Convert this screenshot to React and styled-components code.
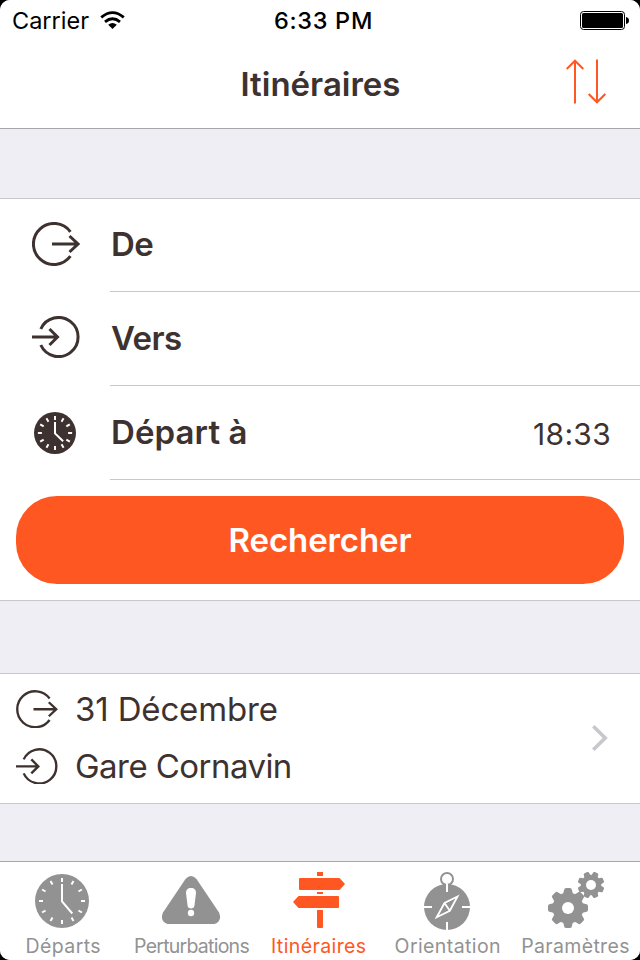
import React from "react";
import styled, { createGlobalStyle } from "styled-components";

const ink = "#3e3230";
const orange = "#ff5722";
const grey = "#929292";
const hairline = "#c8c7cc";

const GlobalStyle = createGlobalStyle`
  * { box-sizing: border-box; }
  body { margin: 0; background: #000; font-family: Inter, "Liberation Sans", sans-serif; }
  svg { display: block; flex: none; }
`;

const Screen = styled.div`
  display: flex;
  flex-direction: column;
  width: 640px;
  height: 960px;
  overflow: hidden;
  border-radius: 10px;
  background: #efeef4;
  color: ${ink};
`;

const Header = styled.header`
  height: 129px;
  background: #fff;
  border-bottom: 1px solid #a7a7aa;
`;

const StatusBar = styled.div`
  display: grid;
  grid-template-columns: 1fr auto 1fr;
  align-items: center;
  height: 41px;
  padding: 0 11px 0 12px;
  color: #000;
  font-size: 23.5px;
  line-height: 41px;
`;

const Carrier = styled.div`
  display: flex;
  align-items: center;
  gap: 11px;
`;

const Time = styled.div`
  font-weight: 500;
  letter-spacing: 0.7px;
  padding-left: 6px;
`;

const Battery = styled.div`
  display: flex;
  justify-content: flex-end;
`;

const TitleBar = styled.div`
  display: grid;
  grid-template-columns: 1fr auto 1fr;
  align-items: center;
  height: 87px;
  padding-right: 32px;
`;

const Title = styled.h1`
  grid-column: 2;
  margin: 0;
  padding-left: 33px;
  font-size: 33px;
  font-weight: 600;
  line-height: 84px;
  height: 86px;
`;

const SwapButton = styled.button`
  justify-self: end;
  margin-top: -6px;
  padding: 0;
  border: 0;
  background: none;
  color: ${orange};
`;

const Panel = styled.section`
  background: #fff;
  border-top: 1px solid ${hairline};
  border-bottom: 1px solid ${hairline};
  margin-top: ${(p) => p.$gap}px;
`;

const Field = styled.div`
  display: flex;
  align-items: center;
  height: ${(p) => p.$height}px;
  padding-left: 32px;
`;

const FieldIcon = styled.div`
  width: 78px;
  padding-left: ${(p) => p.$inset || 0}px;
  padding-bottom: ${(p) => p.$lift || 0}px;
`;

const FieldBody = styled.div`
  flex: 1;
  display: flex;
  justify-content: space-between;
  align-items: center;
  height: 100%;
  padding-right: 29px;
  border-bottom: 1px solid ${hairline};
`;

const FieldLabel = styled.span`
  padding-left: 1px;
  padding-bottom: 2px;
  font-size: 33px;
  font-weight: 600;
  line-height: 40px;
  letter-spacing: ${(p) => p.$spacing || 0}px;
`;

const FieldValue = styled.span`
  padding-top: 3px;
  font-size: 30px;
  line-height: 40px;
  letter-spacing: 0.3px;
`;

const SearchButton = styled.button`
  display: block;
  width: 608px;
  height: 88px;
  margin: 16px;
  padding: 0;
  border: 0;
  border-radius: 41px;
  background: ${orange};
  color: #fff;
  font: 600 33px/88px Inter, "Liberation Sans", sans-serif;
  letter-spacing: -0.1px;
`;

const Recent = styled.div`
  display: flex;
  align-items: center;
  justify-content: space-between;
  height: 129px;
  padding: 0 32px 2px 16px;
`;

const Stops = styled.div`
  display: flex;
  flex-direction: column;
`;

const Stop = styled.div`
  display: flex;
  align-items: center;
  gap: 17px;
  height: 57px;
  font-size: 33px;
  line-height: 56px;
  letter-spacing: ${(p) => p.$spacing}px;
`;

const TabBar = styled.nav`
  display: grid;
  grid-template-columns: repeat(5, 128px);
  height: 99px;
  margin-top: auto;
  background: #fff;
  border-top: 1px solid #a7a7aa;
`;

const Tab = styled.div`
  display: flex;
  flex-direction: column;
  align-items: center;
  padding-top: 8px;
  color: ${(p) => (p.$active ? orange : grey)};
`;

const TabLabel = styled.span`
  margin-top: 1px;
  padding-right: ${(p) => p.$shift || 0}px;
  font-size: 19.5px;
  line-height: 26px;
  white-space: nowrap;
  letter-spacing: ${(p) => p.$spacing}px;
`;

function FromIcon({ scale = 1, stroke = 3 }) {
  return (
    <svg width={48 * scale} height={44 * scale} viewBox="0 0 48 44" fill="none" stroke="currentColor" strokeWidth={stroke}>
      <path d="M38.4 9.8A20.5 20.5 0 1 0 38.4 34.2M20 22H46M37.5 14l8.5 8-8.5 8" />
    </svg>
  );
}

function ToIcon({ scale = 1, stroke = 3 }) {
  return (
    <svg width={48 * scale} height={42 * scale} viewBox="0 0 48 42" fill="none" stroke="currentColor" strokeWidth={stroke}>
      <path d="M8.8 13A19.5 19.5 0 1 1 8.8 29M0 21H25.5M17.5 13l8 8-8 8" />
    </svg>
  );
}

const hours = Array.from({ length: 12 }, (_, i) => i * 30);

function ClockIcon({ small }) {
  return (
    <svg width={small ? 42 : 54} height={small ? 42 : 54} viewBox="-27 -27 54 54" stroke="#fff">
      <circle r="27" fill="currentColor" stroke="none" />
      {hours.map((a) => (
        <path key={a} d={small ? "M0-22V-16.8" : "M0-23V-19"} strokeWidth={small ? 2.5 : 2} transform={`rotate(${a})`} />
      ))}
      <path d={small ? "M0-14V.5L10.5 10.5" : "M0-17V.5L10.3 12.5"} fill="none" strokeWidth={small ? 2.6 : 2} />
    </svg>
  );
}

function WifiIcon() {
  return (
    <svg width="25" height="19" viewBox="0 0 25 19" fill="none" stroke="#000" strokeWidth="2.8">
      <path d="M1.2 6.4Q12.5-3.2 23.8 6.4M5 10.8Q12.5 4.6 20 10.8" />
      <path d="M12.5 18 8.2 13.7Q12.5 10.5 16.8 13.7Z" fill="#000" stroke="none" />
    </svg>
  );
}

function BatteryIcon() {
  return (
    <svg width="49" height="19" viewBox="0 0 49 19">
      <rect x=".5" y=".5" width="44" height="18" rx="3" fill="none" stroke="#000" />
      <rect x="2" y="2" width="41" height="15" rx="1.5" />
      <path d="M46 6q3 .5 3 3.5t-3 3.5Z" />
    </svg>
  );
}

function SwapIcon() {
  return (
    <svg width="42" height="45" viewBox="0 0 42 45" fill="none" stroke="currentColor" strokeWidth="2">
      <path d="M9 44.5V2M.7 10 9 1.7 17.3 10M31 .5V43M22.7 35 31 43.3 39.3 35" />
    </svg>
  );
}

function ChevronIcon() {
  return (
    <svg width="16" height="26" viewBox="0 0 16 26" fill="none" stroke="#c7c7cc" strokeWidth="3.6">
      <path d="M1.3 1.3 13.2 13 1.3 24.7" />
    </svg>
  );
}

function WarningIcon() {
  return (
    <svg width="60" height="54" viewBox="0 0 60 54" fill="currentColor">
      <path d="M23.5 5Q29-1 34.5 5L57 38.500Q60.500 47 52.500 50H5.500Q-2.500 47 1 38.500Z" />
      <path d="M29 14c-3.500 0-5 2-5 5l1.600 12.800c.3 2 1.400 2.700 3.400 2.700s3.100-.7 3.400-2.700L34 19c0-3-1.500-5-5-5Z" fill="#fff" />
      <circle cx="29" cy="39" r="3.2" fill="#fff" />
    </svg>
  );
}

function SignpostIcon() {
  return (
    <svg width="54" height="56" viewBox="0 0 54 56" fill="currentColor">
      <path d="M25 0h6v4h-6zM25 20h6v2h-6zM25 38h6v17q0 1-1 1h-4q-1 0-1-1z" />
      <path d="M8 6H47.5L53 12 47.5 18H8Q7 18 7 17V7Q7 6 8 6ZM6.500 24H46Q47 24 47 25V35Q47 36 46 36H6.500L1 30Z" />
    </svg>
  );
}

function CompassIcon() {
  return (
    <svg width="46" height="58" viewBox="0 0 46 58" fill="none">
      <circle cx="23" cy="35" r="23" fill="currentColor" />
      <circle cx="23" cy="7" r="6" fill="#fff" stroke="currentColor" strokeWidth="2" />
      <path d="M23 12V20M23 50V58M0 35H8M38 35H46" stroke="#fff" strokeWidth="2" />
      <path d="M33.500 24.500 20.500 31 12.700 45.300 25.800 38.800ZM20.500 31 25.800 38.800" stroke="#fff" strokeWidth="1.800" />
    </svg>
  );
}

const teeth = [0, 45, 90, 135, 180, 225, 270, 315];

function GearsIcon() {
  return (
    <svg width="56" height="56" viewBox="0 0 56 56" fill="currentColor">
      <g transform="translate(20 36)">
        <circle r="15.500" />
        {teeth.map((a) => (
          <path key={a} d="M-5-14L-4-17.500Q-4-20-2-20H2Q4-20 4-17.500L5-14Z" transform={`rotate(${a})`} />
        ))}
        <circle r="6" fill="#fff" />
      </g>
      <g transform="translate(43 13)">
        <circle r="10.300" />
        {teeth.map((a) => (
          <path key={a} d="M-3.300-9L-2.800-12Q-2.600-13.400-1.400-13.400H1.400Q2.600-13.400 2.800-12L3.300-9Z" transform={`rotate(${a + 22.5})`} />
        ))}
        <circle r="5" fill="#fff" />
      </g>
    </svg>
  );
}

const IconSlot = styled.div`
  display: flex;
  justify-content: center;
  align-items: flex-start;
  width: 60px;
  height: 62px;
  padding-top: ${(p) => p.$top}px;
  margin-left: ${(p) => p.$dx || 0}px;
`;

const tabs = [
  { label: "Départs", icon: <ClockIcon />, top: 4, dx: -4, spacing: 0.4, shift: 1.5 },
  { label: "Perturbations", icon: <WarningIcon />, top: 4, dx: 0, spacing: -0.75, shift: 1 },
  { label: "Itinéraires", icon: <SignpostIcon />, top: 2, dx: -2, spacing: 0.4, shift: 2.5, active: true },
  { label: "Orientation", icon: <CompassIcon />, top: 2, dx: -2, spacing: 0.4, shift: 0.5 },
  { label: "Paramètres", icon: <GearsIcon />, top: 2, dx: 0, spacing: 0.35, shift: 1 },
];

export default function App() {
  return (
    <Screen>
      <GlobalStyle />
      <Header>
        <StatusBar>
          <Carrier>Carrier <WifiIcon /></Carrier>
          <Time>6:33 PM</Time>
          <Battery><BatteryIcon /></Battery>
        </StatusBar>
        <TitleBar>
          <Title>Itinéraires</Title>
          <SwapButton aria-label="Inverser"><SwapIcon /></SwapButton>
        </TitleBar>
      </Header>
      <Panel $gap={69}>
        <Field $height={93}>
          <FieldIcon $lift={3}><FromIcon /></FieldIcon>
          <FieldBody><FieldLabel $spacing={-0.5}>De</FieldLabel></FieldBody>
        </Field>
        <Field $height={94}>
          <FieldIcon $lift={4}><ToIcon /></FieldIcon>
          <FieldBody><FieldLabel $spacing={-0.6}>Vers</FieldLabel></FieldBody>
        </Field>
        <Field $height={94}>
          <FieldIcon $inset={2}><ClockIcon small /></FieldIcon>
          <FieldBody>
            <FieldLabel $spacing={0.1}>Départ à</FieldLabel>
            <FieldValue>18:33</FieldValue>
          </FieldBody>
        </Field>
        <SearchButton>Rechercher</SearchButton>
      </Panel>
      <Panel $gap={72}>
        <Recent>
          <Stops>
            <Stop $spacing={-0.15}><FromIcon scale={0.875} stroke={2.7} />31 Décembre</Stop>
            <Stop $spacing={-0.55}><ToIcon scale={0.875} stroke={2.7} />Gare Cornavin</Stop>
          </Stops>
          <ChevronIcon />
        </Recent>
      </Panel>
      <TabBar>
        {tabs.map((t) => (
          <Tab key={t.label} $active={t.active}>
            <IconSlot $top={t.top} $dx={t.dx}>{t.icon}</IconSlot>
            <TabLabel $spacing={t.spacing} $shift={t.shift}>{t.label}</TabLabel>
          </Tab>
        ))}
      </TabBar>
    </Screen>
  );
}
